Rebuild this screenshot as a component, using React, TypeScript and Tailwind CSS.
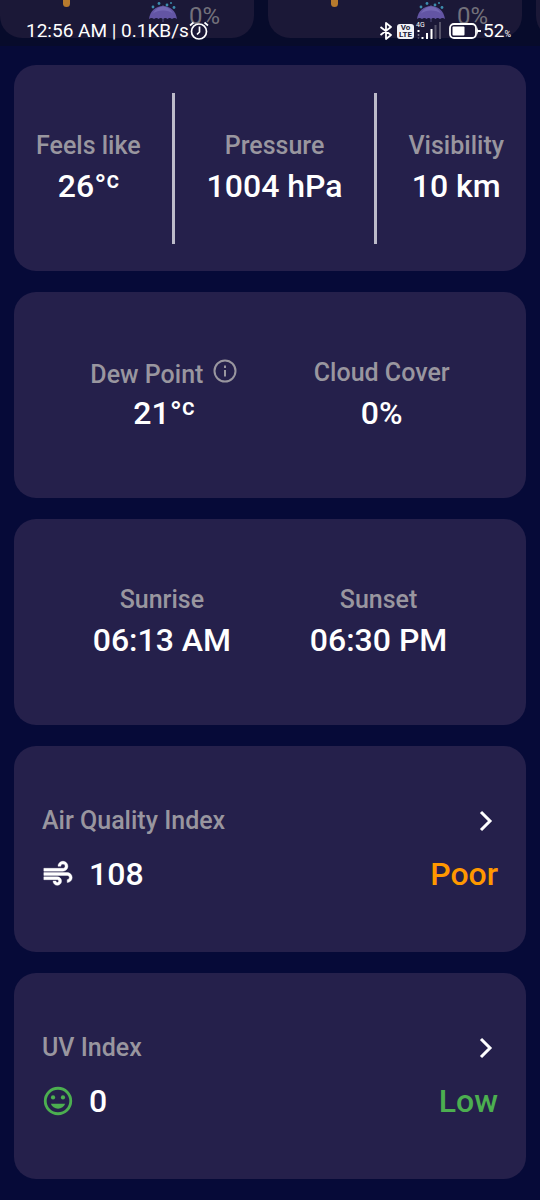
import type { ReactNode } from "react";

function Umbrella() {
  return (
    <svg viewBox="0 0 30 24" className="h-6 w-[30px]" aria-hidden="true">
      <path d="M15 5v17" stroke="#4a4770" strokeWidth="1.2" />
      <path d="M1 19C2 11 8 6 15 6S28 11 29 19q-2.500-2-5 0-2.500-2-4.500 0-2.200-2-4.500 0-2.300-2-4.500 0-2-2-4.500 0-2.500-2-5 0Z" fill="#6355a4" />
      <path d="M5 13.500C7 9.500 11 6.500 15 6.500s8 3 10 7c-5-4-15-4-20 0Z" fill="#7468b4" />
      <g fill="#3c8cad">
        <circle cx="5" cy="7" r="1.400" />
        <circle cx="11" cy="3.500" r="1.400" />
        <circle cx="19" cy="5" r="1.400" />
        <circle cx="26" cy="7.500" r="1.400" />
        <circle cx="23" cy="3" r="1" />
      </g>
    </svg>
  );
}

function ForecastTile({ chance }: { chance?: string }) {
  return (
    <div className="relative h-[38px] w-[254px] shrink-0 rounded-b-[22px] bg-[#1b1837]">
      {chance && (
        <>
          <span className="absolute left-[63px] top-0 h-[7px] w-[7px] rounded-b-full bg-[#b77a2d]" />
          <span className="absolute left-[148px] top-0">
            <Umbrella />
          </span>
          <span className="absolute left-[189px] top-[2px] text-2xl leading-7 text-[#73717b]">{chance}</span>
        </>
      )}
    </div>
  );
}

function StatusIcons() {
  return (
    <div className="flex items-center">
      <svg viewBox="0 0 14 18" className="mr-1 h-[18px] w-[14px]" fill="none" stroke="#fff" strokeWidth="1.800" aria-label="Bluetooth">
        <path d="M1.500 5 12 13 7 17V1l5 4L1.500 13" strokeLinejoin="round" />
      </svg>
      <div className="flex h-[15px] w-[17px] flex-col items-center justify-center rounded-[3px] bg-[#f3f3f7] text-[8px] font-bold leading-[7px] text-[#1b1837]">
        <span>Vo</span>
        <span>LTE</span>
      </div>
      <div className="relative mx-[2px] h-5 w-[26px]">
        <span className="absolute left-0 top-0 text-[7px] leading-[8px] text-white">4G</span>
        <svg viewBox="0 0 26 20" className="h-5 w-[26px]" fill="none" strokeWidth="2" aria-label="Signal strength">
          <path d="M2.500 9v2M6.500 16v2M11 12v6M15.500 8v10" stroke="#fff" />
          <path d="M2.500 13v2M2.500 16.500v1" stroke="#777589" strokeWidth="1.500" />
          <path d="M19.500 4v14M24 1v17" stroke="#555268" />
        </svg>
      </div>
      <svg viewBox="0 0 32 16" className="ml-[5px] h-4 w-8" aria-label="Battery charging">
        <rect x="1" y="1" width="26" height="14" rx="4" fill="none" stroke="#fff" strokeWidth="1.800" />
        <rect x="3.500" y="3.500" width="12" height="9" rx="1" fill="#fff" />
        <path d="m28 4 1 3h3v2h-3l-1 3Z" fill="#fff" />
      </svg>
      <span className="ml-[2px] text-[19px]">
        52<small className="text-[9px]">%</small>
      </span>
    </div>
  );
}

function Header() {
  return (
    <header className="relative h-[46px] overflow-hidden bg-[#070b2b]">
      <div className="flex gap-[14px]">
        <ForecastTile chance="0%" />
        <ForecastTile chance="0%" />
        <ForecastTile />
      </div>
      <div className="absolute inset-x-0 top-[20px] flex h-[22px] items-center justify-between pl-[26px] pr-[29px] text-white">
        <div className="flex items-center text-[19px]">
          <span>12:56 AM | 0.1KB/s</span>
          <svg viewBox="0 0 20 20" className="h-5 w-5" fill="none" stroke="#fff" strokeWidth="1.700" aria-label="Alarm set">
            <circle cx="10" cy="10.500" r="7.500" />
            <path d="M10.500 5.500V11l-2.500 2.500M1 4.500 4.500 1.500M15.500 1.500 19 4.500" />
          </svg>
        </div>
        <StatusIcons />
      </div>
    </header>
  );
}

function Card({ children, className }: { children: ReactNode; className: string }) {
  return <section className={`h-[206px] rounded-[22px] bg-[#25204b] ${className}`}>{children}</section>;
}

function Celsius({ value }: { value: number }) {
  return (
    <span className="flex justify-center">
      {value}°<span className="text-[24px] leading-7">c</span>
    </span>
  );
}

function Stat({ label, children }: { label: ReactNode; children: ReactNode }) {
  return (
    <div className="text-center">
      <h2 className="flex h-8 items-center justify-center gap-[10px] whitespace-nowrap text-[25px] font-medium text-[#99969f]">{label}</h2>
      <div className="mt-1 h-10 whitespace-nowrap text-[32px] font-medium leading-10 text-white">{children}</div>
    </div>
  );
}

function IndexCard({ label, value, level, levelColor, icon }: { label: string; value: number; level: string; levelColor: string; icon: ReactNode }) {
  return (
    <Card className="px-7 pt-[59px]">
      <div className="flex h-8 items-center justify-between">
        <h2 className="text-[25px] font-medium text-[#99969f]">{label}</h2>
        <button type="button" aria-label={`${label} details`} className="mr-[5px] cursor-pointer">
          <svg viewBox="0 0 14 22" className="h-[22px] w-[14px]" fill="none" stroke="#fff" strokeWidth="3">
            <path d="m2 2 9 9-9 9" />
          </svg>
        </button>
      </div>
      <div className="mt-[17px] flex h-10 items-center text-[32px] font-medium leading-10 text-white">
        {icon}
        <span className="ml-[14px] flex-1">{value}</span>
        <span className={levelColor}>{level}</span>
      </div>
    </Card>
  );
}

function AirIcon() {
  return (
    <svg viewBox="0 0 24 24" className="-ml-px h-[34px] w-[34px]" fill="#fff" stroke="#fff" strokeWidth="0.3" aria-hidden="true">
      <path d="M14.500 17c0 1.650-1.350 3-3 3s-3-1.350-3-3h2c0 .55.45 1 1 1s1-.45 1-1-.45-1-1-1H2v-2h9.500c1.650 0 3 1.350 3 3zM19 6.500C19 4.570 17.430 3 15.500 3S12 4.570 12 6.500h2c0-.83.67-1.500 1.500-1.500s1.500.67 1.500 1.500S16.330 8 15.500 8H2v2h13.500c1.930 0 3.500-1.570 3.500-3.500zm-.5 4.500H2v2h16.500c.83 0 1.500.67 1.500 1.500s-.67 1.500-1.500 1.500v2c1.930 0 3.500-1.570 3.500-3.500S20.430 11 18.500 11z" />
    </svg>
  );
}

function SmileIcon() {
  return (
    <svg viewBox="0 0 24 24" className="-ml-px h-[34px] w-[34px]" aria-hidden="true">
      <circle cx="12" cy="12" r="9" fill="none" stroke="#4caf50" strokeWidth="2" />
      <g fill="#4caf50">
        <circle cx="8.500" cy="9.500" r="1.500" />
        <circle cx="15.500" cy="9.500" r="1.500" />
        <path d="M12 17.500c2.330 0 4.310-1.460 5.110-3.500H6.890c.8 2.040 2.780 3.500 5.110 3.500Z" />
      </g>
    </svg>
  );
}

export default function App() {
  return (
    <div className="min-h-screen overflow-x-hidden bg-[#060a38] font-['Roboto',sans-serif]">
      <Header />
      <main className="flex flex-col gap-[21px] px-[14px] pb-[21px] pt-[19px]">
        <Card className="flex items-center justify-between pl-[22px] pr-[22px]">
          <Stat label="Feels like">
            <Celsius value={26} />
          </Stat>
          <div className="h-[151px] w-[3px] bg-[#bcbac9]" />
          <Stat label="Pressure">1004 hPa</Stat>
          <div className="h-[151px] w-[3px] bg-[#bcbac9]" />
          <Stat label="Visibility">10 km</Stat>
        </Card>
        <Card className="flex items-center justify-evenly">
          <Stat
            label={
              <>
                <span className="pt-1">Dew Point</span>
                <svg viewBox="0 0 24 24" className="mb-1 h-6 w-6" fill="none" stroke="#99969f" strokeWidth="2" aria-label="Information">
                  <circle cx="12" cy="12" r="10.500" />
                  <path d="M12 11v6.500M12 6.500V9" />
                </svg>
              </>
            }
          >
            <Celsius value={21} />
          </Stat>
          <Stat label="Cloud Cover">0%</Stat>
        </Card>
        <Card className="flex items-center justify-evenly">
          <Stat label="Sunrise">06:13 AM</Stat>
          <Stat label="Sunset">06:30 PM</Stat>
        </Card>
        <IndexCard label="Air Quality Index" value={108} level="Poor" levelColor="text-[#ff9800]" icon={<AirIcon />} />
        <IndexCard label="UV Index" value={0} level="Low" levelColor="text-[#4caf50]" icon={<SmileIcon />} />
      </main>
    </div>
  );
}
